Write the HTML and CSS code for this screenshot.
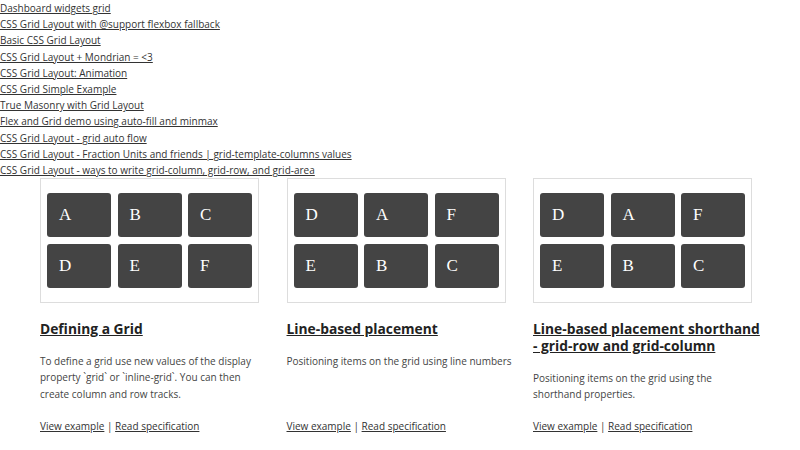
FILE: index.html
```html
<!DOCTYPE html>
<html>
<head>
<meta charset="utf-8">
<link rel="stylesheet" href="styles.css">
</head>
<body>
<nav class="links">
  <a href="#">Dashboard widgets grid</a>
  <a href="#">CSS Grid Layout with @support flexbox fallback</a>
  <a href="#">Basic CSS Grid Layout</a>
  <a href="#">CSS Grid Layout + Mondrian = &lt;3</a>
  <a href="#">CSS Grid Layout: Animation</a>
  <a href="#">CSS Grid Simple Example</a>
  <a href="#">True Masonry with Grid Layout</a>
  <a href="#">Flex and Grid demo using auto-fill and minmax</a>
  <a href="#">CSS Grid Layout - grid auto flow</a>
  <a href="#">CSS Grid Layout - Fraction Units and friends | grid-template-columns values</a>
  <a href="#">CSS Grid Layout - ways to write grid-column, grid-row, and grid-area</a>
</nav>
<main class="cards">
  <section class="card">
    <div class="demo">
      <div class="box">A</div><div class="box">B</div><div class="box">C</div>
      <div class="box">D</div><div class="box">E</div><div class="box">F</div>
    </div>
    <h2 class="title"><a href="#">Defining a Grid</a></h2>
    <p class="desc">To define a grid use new values of the display property `grid` or `inline-grid`. You can then create column and row tracks.</p>
    <p class="meta"><a href="#">View example</a> | <a href="#">Read specification</a></p>
  </section>
  <section class="card">
    <div class="demo">
      <div class="box">D</div><div class="box">A</div><div class="box">F</div>
      <div class="box">E</div><div class="box">B</div><div class="box">C</div>
    </div>
    <h2 class="title"><a href="#">Line-based placement</a></h2>
    <p class="desc">Positioning items on the grid using line numbers</p>
    <p class="meta"><a href="#">View example</a> | <a href="#">Read specification</a></p>
  </section>
  <section class="card">
    <div class="demo">
      <div class="box">D</div><div class="box">A</div><div class="box">F</div>
      <div class="box">E</div><div class="box">B</div><div class="box">C</div>
    </div>
    <h2 class="title"><a href="#">Line-based placement shorthand - grid-row and grid-column</a></h2>
    <p class="desc">Positioning items on the grid using the shorthand properties.</p>
    <p class="meta"><a href="#">View example</a> | <a href="#">Read specification</a></p>
  </section>
</main>
</body>
</html>
```
FILE: styles.css
```css
html, body {
  margin: 0;
  padding: 0;
  background: #fff;
}
body {
  font-family: "Open Sans", "DejaVu Sans", sans-serif;
  color: #333;
  font-size: 10px;
}
a {
  color: #333;
  text-decoration: underline;
}
.links {
  display: flex;
  flex-direction: column;
  align-items: flex-start;
}
.links a {
  display: block;
  line-height: 16.2px;
}
.cards {
  display: grid;
  grid-template-columns: repeat(3, 228px);
  column-gap: 18.5px;
  padding-left: 40px;
}
.card {
  display: flex;
  flex-direction: column;
}
.demo {
  width: 205px;
  border: 1px solid #ddd;
  padding: 14px 6px;
  display: grid;
  grid-template-columns: repeat(3, 64px);
  grid-auto-rows: 44px;
  gap: 6.5px;
}
.box {
  background: #444;
  color: #fff;
  border-radius: 3px;
  font-family: "Liberation Serif", "Times New Roman", serif;
  font-size: 17px;
  line-height: 44px;
  padding-left: 12px;
}
.title {
  margin: 17px 0 0;
  font-size: 13.8px;
  font-weight: 700;
  line-height: 17px;
}
.title a {
  color: #222;
}
.desc {
  margin: 16px 0 0;
  line-height: 16.5px;
  color: #444;
}
.meta {
  margin: auto 0 0;
  padding-top: 15px;
  line-height: 16px;
}
```
